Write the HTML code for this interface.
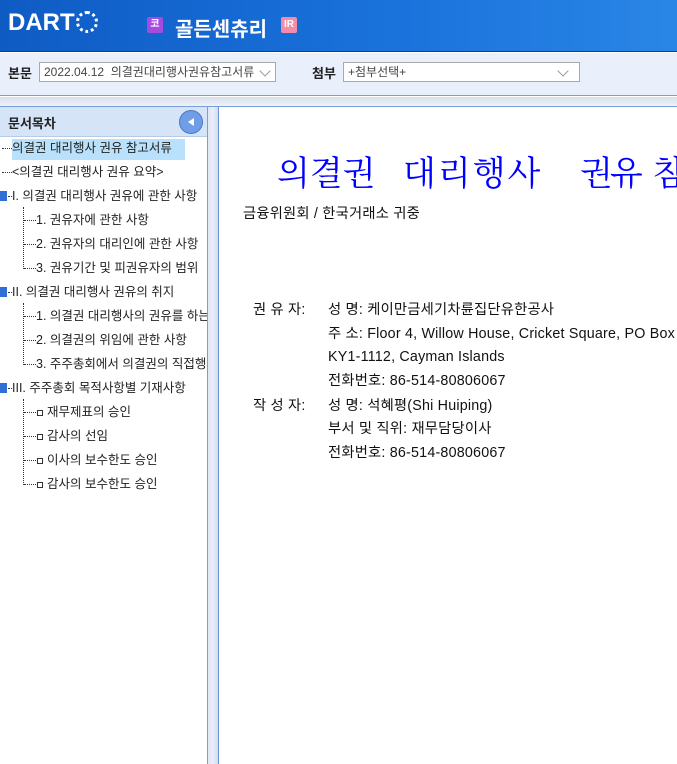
<!DOCTYPE html>
<html><head><meta charset="utf-8"><style>
*{margin:0;padding:0;box-sizing:border-box}
body{width:677px;height:764px;overflow:hidden;background:#fff;font-family:"Liberation Sans","Noto Sans CJK KR",sans-serif;position:relative}
.hdr{position:absolute;left:0;top:0;width:677px;height:52px;background:linear-gradient(90deg,#0f5bc4,#1a73dc 60%,#2a86e6);border-bottom:1px solid #0a3f8e}
.logo{position:absolute;left:8px;top:9px;color:#fff;font-weight:bold;font-size:24px;font-family:"Liberation Sans",sans-serif}
.badge{position:absolute;top:17px;width:16px;height:16px;border-radius:2px;color:#fff;font-size:10px;font-weight:bold;text-align:center;line-height:16px}
.tb{position:absolute;left:0;top:53px;width:677px;height:43px;background:#e9f0fb;border-bottom:1px solid #7a9fd6}
.lbl{position:absolute;top:63px;font-size:13px;font-weight:bold;color:#222}
.sel{position:absolute;top:62px;height:20px;border:1px solid #a9a9a9;background:#fff;font-size:12px;color:#444;padding-left:4px;line-height:18px;white-space:nowrap;overflow:hidden}
.arr{position:absolute;right:6px;top:4px;width:8px;height:8px;border-right:1px solid #999;border-bottom:1px solid #999;transform:rotate(45deg)}
.gap{position:absolute;left:0;top:97px;width:677px;height:9px;background:linear-gradient(#d9e0ea,#eef2f9)}
.left{position:absolute;left:0;top:106px;width:208px;height:658px;background:#fff;border-top:1px solid #7a9fd6;border-right:1px solid #7a9fd6;overflow:hidden}
.lh{height:30px;background:#d6e4f8;border-bottom:1px solid #b8cbe6;font-size:13px;font-weight:bold;color:#222;padding:6px 0 0 8px;position:relative}
.btn{position:absolute;right:4px;top:3px;width:24px;height:24px;border-radius:50%;background:#6f9de6;border:1px solid #4a78c8}
.btn:after{content:"";position:absolute;left:8px;top:7px;border-right:6px solid #fff;border-top:4px solid transparent;border-bottom:4px solid transparent}
.split{position:absolute;left:208px;top:106px;width:11px;height:658px;background:linear-gradient(90deg,#dfe7f6,#e8eef9,#d2dcee);border-right:1px solid #6c95d6;border-top:1px solid #7a9fd6}
.it{position:absolute;font-size:12.5px;color:#222;white-space:nowrap;line-height:16px}
.dots{display:inline-block;border-top:1px dotted #333;vertical-align:middle}
.chk{position:absolute;left:0;width:7px;height:10px;background:#2f6fd6}
.vl{position:absolute;border-left:1px dotted #333}
.sq{display:inline-block;width:6px;height:6px;border:1px solid #333;margin:0 4px 0 1px;vertical-align:middle}
.content{position:absolute;left:219px;top:106px;width:458px;height:658px;border-top:1px solid #7a9fd6;overflow:hidden}
.title{position:absolute;top:42px;font-size:34px;line-height:44px;color:#0000ff;white-space:nowrap;font-family:"Noto Serif CJK SC","Liberation Serif",serif}
.t{position:absolute;font-size:14.3px;line-height:18px;height:18px;color:#111;white-space:nowrap;letter-spacing:0.2px}
</style></head><body>
<div class="hdr">
 <div class="logo">DART<span style="display:inline-block;width:22px;height:22px;border-radius:50%;border:3px dotted #fff;vertical-align:-3px;margin-left:1px"></span></div>
 <div class="badge" style="left:147px;background:#a64be0">코</div>
 <div style="position:absolute;left:175px;top:13px;color:#fff;font-size:20px;font-weight:bold">골든센츄리</div>
 <div class="badge" style="left:281px;background:#f38ca9">IR</div>
</div>
<div class="tb"></div>
<div class="lbl" style="left:8px">본문</div>
<div class="sel" style="left:39px;width:237px">2022.04.12 &nbsp;의결권대리행사권유참고서류<span class="arr"></span></div>
<div class="lbl" style="left:312px">첨부</div>
<div class="sel" style="left:343px;width:237px">+첨부선택+<span class="arr" style="right:12px"></span></div>
<div class="gap"></div>
<div class="left"><div class="lh">문서목차<div class="btn"></div></div>
<div style="position:absolute;left:12px;top:32px;width:173px;height:21px;background:#b9e1fb"></div>
<div class="it" style="left:2px;top:33px"><span class="dots" style="width:10px"></span>의결권 대리행사 권유 참고서류</div>
<div class="it" style="left:2px;top:57px"><span class="dots" style="width:10px"></span>&lt;의결권 대리행사 권유 요약&gt;</div>
<div class="chk" style="top:84px"></div>
<div class="it" style="left:8px;top:81px"><span class="dots" style="width:4px"></span>I. 의결권 대리행사 권유에 관한 사항</div>
<div class="vl" style="left:23px;top:100px;height:62px"></div>
<div class="it" style="left:24px;top:105px"><span class="dots" style="width:12px"></span>1. 권유자에 관한 사항</div>
<div class="it" style="left:24px;top:129px"><span class="dots" style="width:12px"></span>2. 권유자의 대리인에 관한 사항</div>
<div class="it" style="left:24px;top:153px"><span class="dots" style="width:12px"></span>3. 권유기간 및 피권유자의 범위</div>
<div class="chk" style="top:180px"></div>
<div class="it" style="left:8px;top:177px"><span class="dots" style="width:4px"></span>II. 의결권 대리행사 권유의 취지</div>
<div class="vl" style="left:23px;top:196px;height:62px"></div>
<div class="it" style="left:24px;top:201px"><span class="dots" style="width:12px"></span>1. 의결권 대리행사의 권유를 하는 취지</div>
<div class="it" style="left:24px;top:225px"><span class="dots" style="width:12px"></span>2. 의결권의 위임에 관한 사항</div>
<div class="it" style="left:24px;top:249px"><span class="dots" style="width:12px"></span>3. 주주총회에서 의결권의 직접행사</div>
<div class="chk" style="top:276px"></div>
<div class="it" style="left:8px;top:273px"><span class="dots" style="width:4px"></span>III. 주주총회 목적사항별 기재사항</div>
<div class="vl" style="left:23px;top:292px;height:86px"></div>
<div class="it" style="left:24px;top:297px"><span class="dots" style="width:12px"></span><span class="sq"></span>재무제표의 승인</div>
<div class="it" style="left:24px;top:321px"><span class="dots" style="width:12px"></span><span class="sq"></span>감사의 선임</div>
<div class="it" style="left:24px;top:345px"><span class="dots" style="width:12px"></span><span class="sq"></span>이사의 보수한도 승인</div>
<div class="it" style="left:24px;top:369px"><span class="dots" style="width:12px"></span><span class="sq"></span>감사의 보수한도 승인</div>
</div>
<div class="split"></div>
<div class="content">
<div class="title" style="left:58px">의결권</div>
<div class="title" style="left:184px;letter-spacing:2px">대리행사</div>
<div class="title" style="left:361px;letter-spacing:-3px">권유</div>
<div class="title" style="left:434px;letter-spacing:2px">참고서류</div>
<div class="t" style="left:24px;top:98px">금융위원회 / 한국거래소 귀중</div>
<div class="t" style="left:34px;top:194px">권 유 자:</div>
<div class="t" style="left:109px;top:194px">성 명: 케이만금세기차륜집단유한공사</div>
<div class="t" style="left:109px;top:218px">주 소: Floor 4, Willow House, Cricket Square, PO Box 2804</div>
<div class="t" style="left:109px;top:241px">KY1-1112, Cayman Islands</div>
<div class="t" style="left:109px;top:265px">전화번호: 86-514-80806067</div>
<div class="t" style="left:34px;top:290px">작 성 자:</div>
<div class="t" style="left:109px;top:290px">성 명: 석혜평(Shi Huiping)</div>
<div class="t" style="left:109px;top:313px">부서 및 직위: 재무담당이사</div>
<div class="t" style="left:109px;top:337px">전화번호: 86-514-80806067</div>
</div>
</body></html>
